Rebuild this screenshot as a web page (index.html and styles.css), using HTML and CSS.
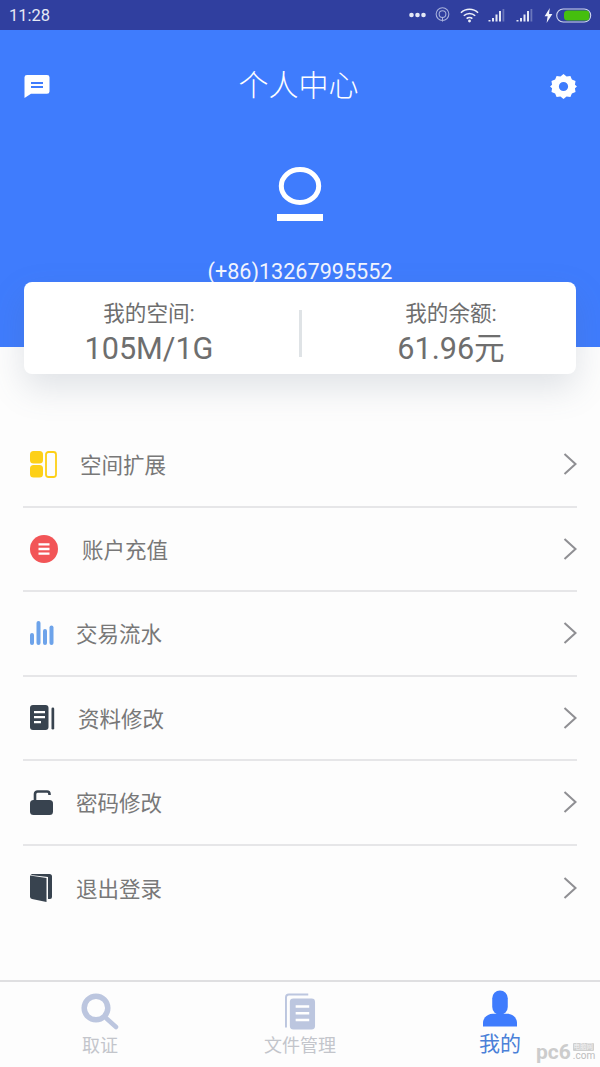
FILE: index.html
```html
<!DOCTYPE html>
<html lang="zh-CN">
<head>
<meta charset="utf-8">
<title>个人中心</title>
<link rel="stylesheet" href="styles.css">
</head>
<body>
<div class="page">
  <div class="statusbar">
    <span class="time">11:28</span>
    <div class="status-icons">
      <svg width="17" height="6" viewBox="0 0 17 6"><g fill="#e4e8f5"><circle cx="2.500" cy="3" r="2.300"/><circle cx="8.500" cy="3" r="2.300"/><circle cx="14.500" cy="3" r="2.300"/></g></svg>
      <svg class="si-hot" width="15" height="18" viewBox="0 0 16 18"><g fill="none" stroke="#aab4de" stroke-width="1.100"><circle cx="8" cy="8" r="6.800"/><circle cx="8" cy="8" r="3.600"/><path d="M8 11v5"/></g></svg>
      <svg class="si-wifi" width="19" height="15" viewBox="0 0 20 15"><g fill="none" stroke="#eef1fa" stroke-width="1.700"><path d="M1 4.600a13 13 0 0 1 18 0"/><path d="M4 7.800a8.600 8.600 0 0 1 12 0"/><path d="M7 10.800a4.200 4.200 0 0 1 6 0"/></g><circle cx="10" cy="13.300" r="1.500" fill="#eef1fa"/></svg>
      <svg class="si-sig" width="18" height="14" viewBox="0 0 17 14"><path d="M0 12h2v1.500H0zM3.500 10h2v3.500h-2zM7 6.500h2v7H7zM10.500 3h2v10.500h-2z" fill="#e4e8f5"/><path d="M14 1h1.800v12.500H14z" fill="#6a77bb"/></svg>
      <svg class="si-sig2" width="18" height="14" viewBox="0 0 17 14"><path d="M0 12h2v1.500H0zM3.500 10h2v3.500h-2zM7 6.500h2v7H7zM10.500 3h2v10.500h-2z" fill="#e4e8f5"/><path d="M14 1h1.800v12.500H14z" fill="#6a77bb"/></svg>
      <svg class="si-bolt" width="9" height="15" viewBox="0 0 9 15"><path d="M5.800 0 .6 8.300h3L2.600 15l5.800-9H5z" fill="#f2f4fb"/></svg>
      <svg class="si-bat" width="36" height="15" viewBox="0 0 36 15"><rect x=".7" y="1" width="34" height="13" rx="6.500" fill="none" stroke="#cfd6ee" stroke-width="1.100"/><rect x="8" y="2.600" width="25.500" height="9.800" rx="3.500" fill="#45bf0e"/></svg>
    </div>
  </div>

  <header class="hero">
    <div class="topbar">
      <svg class="ico-msg" width="26" height="23" viewBox="0 0 26 25" preserveAspectRatio="none"><path d="M3 0h20a2.500 2.500 0 0 1 2.500 2.500V18a2.500 2.500 0 0 1-2.500 2.500H7L.5 25V2.500A2.500 2.500 0 0 1 3 0z" fill="#fff"/><path d="M7 7.500h12v2.200H7zM7 12h12v2.200H7z" fill="#3f7cfd"/></svg>
      <h1 class="title">个人中心</h1>
      <svg class="ico-gear" width="25" height="25" viewBox="0 0 26 26"><path fill="#fff" fill-rule="evenodd" d="M13 0l3.200 2.600 4-.6 1.500 3.800 3.800 1.500-.6 4L27 13l-2.100 1.700.6 4-3.800 1.500-1.500 3.800-4-.6L13 26l-3.200-2.600-4 .6-1.500-3.800-3.800-1.500.6-4L-1 13l2.100-1.700-.6-4 3.800-1.500L5.800 2l4 .6zM13 8.200a4.800 4.800 0 1 0 0 9.600 4.800 4.800 0 0 0 0-9.600z"/></svg>
    </div>
    <svg class="avatar" width="46" height="54" viewBox="0 0 46 54"><ellipse cx="23" cy="19" rx="18.700" ry="16.500" fill="none" stroke="#fff" stroke-width="5"/><rect x="0" y="47" width="46" height="7" fill="#fff"/></svg>
    <div class="phone">(+86)13267995552</div>
  </header>

  <section class="card">
    <div class="stat">
      <div class="stat-label">我的空间:</div>
      <div class="stat-value">105M/1G</div>
    </div>
    <div class="stat-sep"></div>
    <div class="stat stat-right">
      <div class="stat-label">我的余额:</div>
      <div class="stat-value">61.96元</div>
    </div>
  </section>

  <nav class="menu">
    <div class="row">
      <span class="row-ico w-57"><svg width="27" height="27" viewBox="0 0 27 27"><rect x="0" y="0" width="13" height="12.500" rx="3.500" fill="#fdd017"/><rect x="0" y="14" width="13" height="12.500" rx="3.500" fill="#fdd017"/><rect x="16" y="1" width="10" height="25" rx="2.500" fill="none" stroke="#fdd017" stroke-width="1.800"/></svg></span>
      <span class="row-text">空间扩展</span>
      <svg class="chev" width="14" height="22" viewBox="0 0 14 22"><path d="M1.500 1 12.500 11 1.500 21" fill="none" stroke="#8f8f93" stroke-width="2"/></svg>
    </div>
    <div class="row">
      <span class="row-ico w-59"><svg width="28" height="28" viewBox="0 0 28 28"><circle cx="14" cy="14" r="14" fill="#f25557"/><path d="M8.500 8.200h11v2.400h-11zM8.500 12.800h11v2.400h-11zM8.500 17.400h11v2.400h-11z" fill="#fff"/></svg></span>
      <span class="row-text">账户充值</span>
      <svg class="chev" width="14" height="22" viewBox="0 0 14 22"><path d="M1.500 1 12.500 11 1.500 21" fill="none" stroke="#8f8f93" stroke-width="2"/></svg>
    </div>
    <div class="row">
      <span class="row-ico w-53"><svg width="24" height="24" viewBox="0 0 24 24"><g fill="#6da3ea"><rect x="0" y="12" width="4" height="12" rx="2"/><rect x="6.500" y="0" width="4" height="24" rx="2"/><rect x="13" y="8" width="4" height="16" rx="2"/><rect x="19.500" y="4.500" width="4" height="19.500" rx="2"/></g></svg></span>
      <span class="row-text">交易流水</span>
      <svg class="chev" width="14" height="22" viewBox="0 0 14 22"><path d="M1.500 1 12.500 11 1.500 21" fill="none" stroke="#8f8f93" stroke-width="2"/></svg>
    </div>
    <div class="row">
      <span class="row-ico w-55"><svg width="25" height="25" viewBox="0 0 25 25"><rect x="0" y="0" width="18.500" height="25" rx="3" fill="#38434f"/><path d="M4 6h11v2.300H4zM4 11h11v2.300H4zM4 16h7v2.300H4z" fill="#fff"/><rect x="21.500" y="2.500" width="2.700" height="22" rx="1.300" fill="#38434f"/></svg></span>
      <span class="row-text">资料修改</span>
      <svg class="chev" width="14" height="22" viewBox="0 0 14 22"><path d="M1.500 1 12.500 11 1.500 21" fill="none" stroke="#8f8f93" stroke-width="2"/></svg>
    </div>
    <div class="row">
      <span class="row-ico w-53"><svg width="23" height="25" viewBox="0 0 23 25"><path d="M5 11V4a2.500 2.500 0 0 1 2.500-2.500H17a2.500 2.500 0 0 1 2.500 2.500v1" fill="none" stroke="#38434f" stroke-width="2.600"/><rect x="0" y="10" width="23" height="15" rx="3.500" fill="#38434f"/></svg></span>
      <span class="row-text">密码修改</span>
      <svg class="chev" width="14" height="22" viewBox="0 0 14 22"><path d="M1.500 1 12.500 11 1.500 21" fill="none" stroke="#8f8f93" stroke-width="2"/></svg>
    </div>
    <div class="row">
      <span class="row-ico w-53"><svg width="22" height="28" viewBox="0 0 22 28"><path d="M2 0h17.500A2.500 2.500 0 0 1 22 2.500V23a2 2 0 0 1-2 2h-2V3L.5 1z" fill="#38434f"/><path d="M0 1.500 16.500 4v24L2 25a2.500 2.500 0 0 1-2-2.500z" fill="#38434f"/></svg></span>
      <span class="row-text">退出登录</span>
      <svg class="chev" width="14" height="22" viewBox="0 0 14 22"><path d="M1.500 1 12.500 11 1.500 21" fill="none" stroke="#8f8f93" stroke-width="2"/></svg>
    </div>
  </nav>

  <footer class="tabbar">
    <div class="tab tab-1">
      <svg class="tab-ico" width="38" height="37" viewBox="0 0 38 37"><circle cx="15" cy="15" r="11.800" fill="none" stroke="#bcc6df" stroke-width="5.500"/><path d="M25.500 25.500 35 34" fill="none" stroke="#bcc6df" stroke-width="4.500" stroke-linecap="round"/></svg>
      <span class="tab-label">取证</span>
    </div>
    <div class="tab tab-2">
      <svg class="tab-ico" width="31" height="37" viewBox="0 0 32 37"><path d="M1 35V4a3 3 0 0 1 3-3h20" fill="none" stroke="#bcc6df" stroke-width="2"/><rect x="5" y="5" width="26" height="32" rx="3.500" fill="#bcc6df"/><path d="M11 12h14v2.500H11zM11 19h14v2.500H11zM11 26h14v2.500H11z" fill="#fff"/></svg>
      <span class="tab-label">文件管理</span>
    </div>
    <div class="tab tab-3">
      <svg class="tab-ico person" width="34" height="37" viewBox="0 0 35 37"><rect x="9.500" y="0" width="16" height="25" rx="8" fill="#3f7cfd"/><path d="M0 37v-4c0-5 5-9 10-9h15c5 0 10 4 10 9v4z" fill="#3f7cfd"/></svg>
      <span class="tab-label active">我的</span>
    </div>
    <div class="watermark">
      <span class="wm-main">pc6</span>
      <span class="wm-side"><span class="wm-box">电脑网</span><span class="wm-com">.com</span></span>
    </div>
  </footer>
</div>
</body>
</html>
```
FILE: styles.css
```css
* { box-sizing: border-box; }
html, body { margin: 0; padding: 0; }
body {
  font-family: Roboto, "Noto Sans CJK SC", sans-serif;
  background: #fdfdfd;
}
.page {
  position: relative;
  width: 600px;
  height: 1067px;
  display: flex;
  flex-direction: column;
  overflow: hidden;
  background: #fdfdfd;
}
.statusbar {
  height: 30px;
  flex: none;
  background: #303f9f;
  display: flex;
  align-items: center;
  justify-content: space-between;
  padding: 0 8px 0 9px;
  color: #e6e9f5;
}
.time { font-size: 16.5px; }
.status-icons { display: flex; align-items: center; }
.si-hot { margin-left: 9px; }
.si-wifi { margin-left: 10px; }
.si-sig { margin-left: 9px; }
.si-sig2 { margin-left: 10px; }
.si-bolt { margin-left: 10px; }
.si-bat { margin-left: 3px; }

.hero {
  flex: none;
  height: 317px;
  background: #3f7cfd;
  color: #fff;
  display: flex;
  flex-direction: column;
  align-items: center;
}
.topbar {
  width: 100%;
  display: flex;
  align-items: center;
  justify-content: space-between;
  padding: 30px 24px 0 24px;
  height: 82px;
}
.ico-gear { overflow: visible; }
.title {
  margin: 0 4px 0 0;
  font-size: 30px;
  font-weight: 300;
  line-height: 34px;
}
.avatar { margin-top: 55px; flex: none; }
.phone {
  margin-top: 39px;
  font-size: 21.6px;
  line-height: 24px;
  color: #f2f5ff;
}
.card {
  position: relative;
  flex: none;
  margin: -65px 24px 0;
  height: 92px;
  padding-top: 11px;
  background: #fff;
  border-radius: 8px;
  box-shadow: 0 14px 34px rgba(90, 105, 125, .18);
  display: flex;
  align-items: center;
}
.stat { flex: none; width: 250px; text-align: center; color: #6e6e6e; }
.stat-right { flex: 1; padding-left: 24px; }
.stat-label { font-size: 21.6px; line-height: 28px; }
.stat-value { font-size: 30.6px; line-height: 36px; margin-top: 3px; }
.stat-sep { flex: none; width: 3px; height: 47px; background: #dfe3e6; margin-left: 25px; }
.menu { flex: none; margin-top: 49px; }
.row {
  height: 84.5px;
  margin: 0 23px;
  display: flex;
  align-items: center;
  border-bottom: 2px solid #e6e6e8;
  padding: 0 0 0 7px;
}
.row:last-child { border-bottom: 0; }
.row-ico { flex: none; display: flex; align-items: center; }
.w-57 { width: 50px; }
.w-59 { width: 52px; }
.w-53 { width: 46px; }
.w-55 { width: 48px; }
.row-text { flex: 1; font-size: 21.5px; color: #787878; margin-bottom: 1px; }

.tabbar {
  position: relative;
  margin-top: auto;
  height: 87px;
  border-top: 2px solid #dfdfe1;
  flex: none;
}
.tab {
  position: absolute;
  top: 11px;
  width: 120px;
  display: flex;
  flex-direction: column;
  align-items: center;
}
.tab-1 { left: 40px; }
.tab-2 { left: 240px; }
.tab-3 { left: 440px; }
.tab-ico { display: block; }
.tab-ico.person { margin-top: -3px; }
.tab-label { font-size: 18px; line-height: 22px; margin-top: 5px; color: #c3c5cb; }
.tab-label.active { font-size: 21px; color: #4a80d8; margin-top: 6px; }
.watermark {
  position: absolute;
  left: 536px;
  top: 59px;
  display: flex;
  align-items: center;
  gap: 2px;
  color: #cccccc;
}
.wm-main { font-size: 21px; font-weight: 700; line-height: 22px; }
.wm-side { display: flex; flex-direction: column; align-items: flex-start; }
.wm-box { font-size: 6.5px; line-height: 8px; width: 21px; text-align: center; background: #cfcfcf; color: #f4f4f4; border-radius: 1px; }
.wm-com { font-size: 10px; line-height: 10px; color: #bcbcbc; }
```
